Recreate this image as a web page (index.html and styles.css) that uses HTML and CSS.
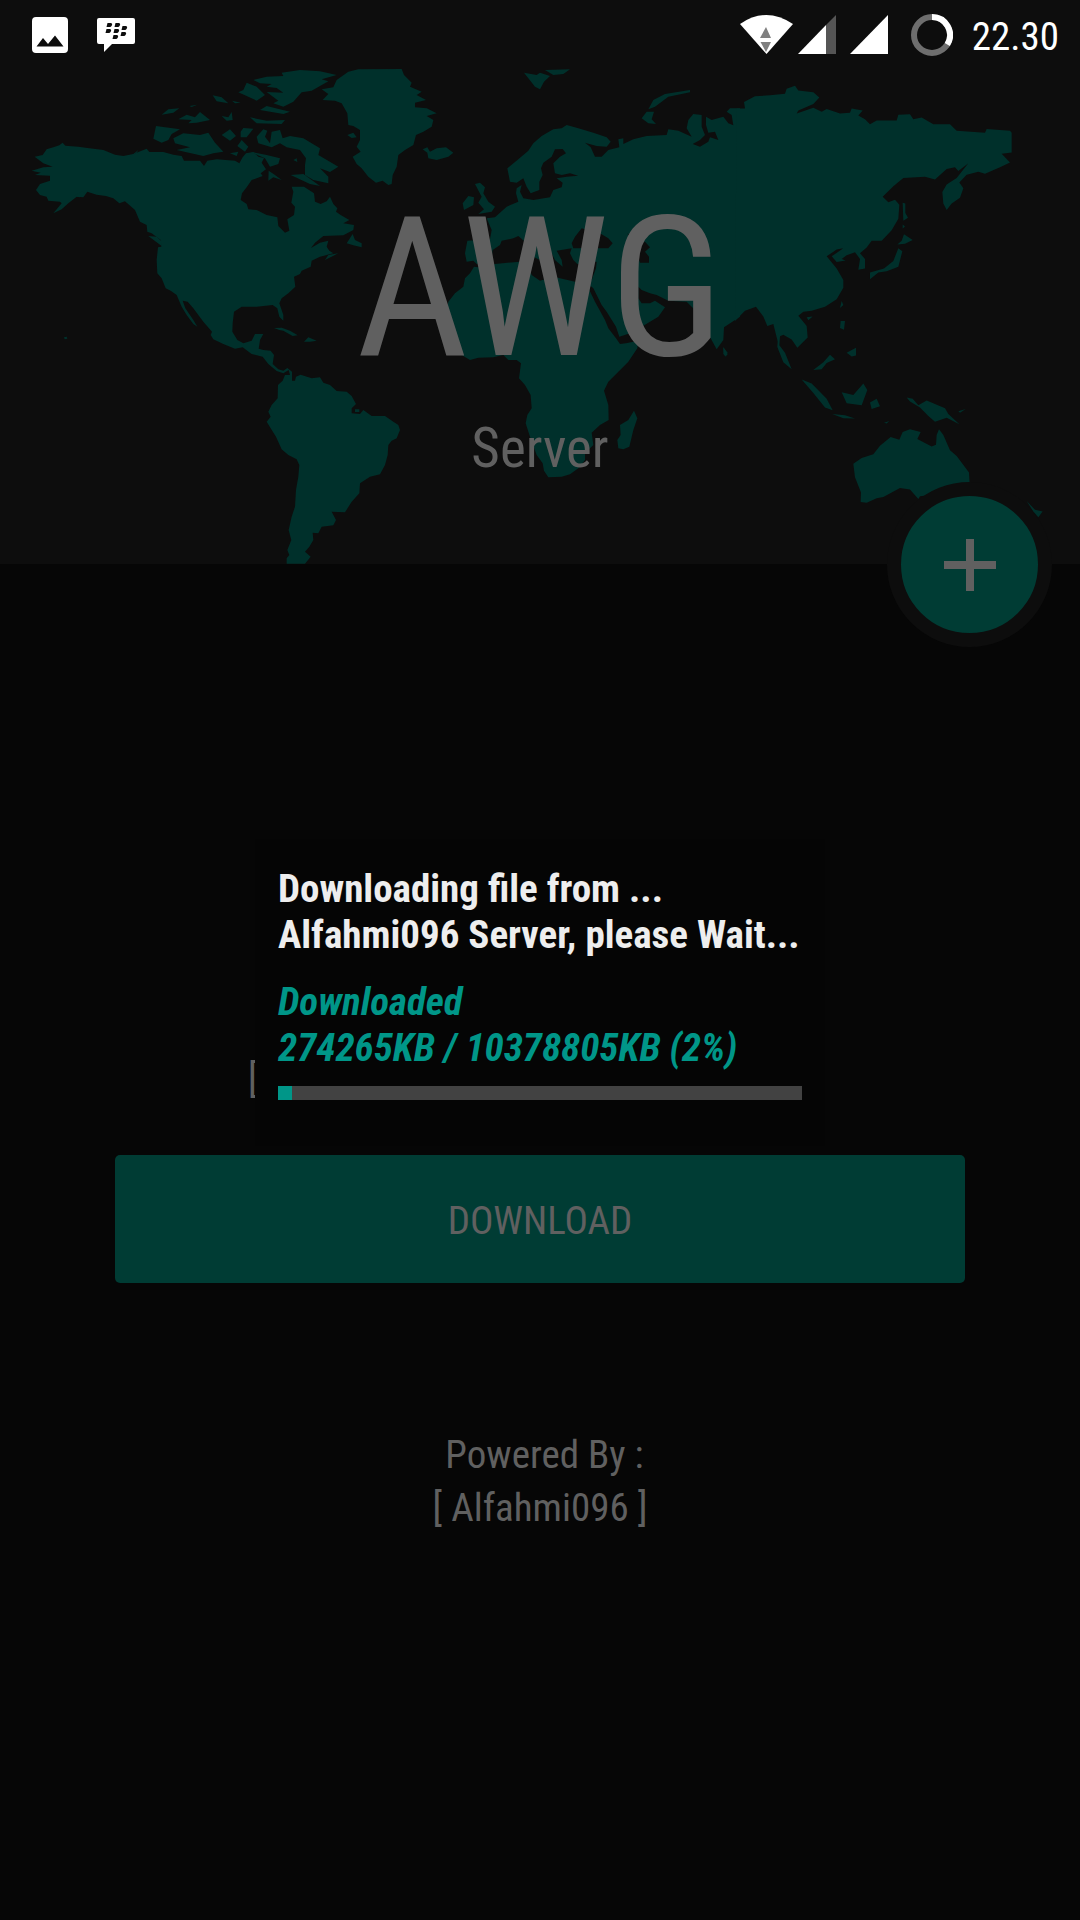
FILE: index.html
```html
<!DOCTYPE html>
<html lang="en">
<head>
<meta charset="utf-8">
<meta name="viewport" content="width=device-width, initial-scale=1">
<title>AWG Server</title>
<link rel="stylesheet" href="styles.css">
</head>
<body>
<div class="status-bar">
  <div class="status-group status-left">
    <svg width="36" height="36" viewBox="0 0 36 36" aria-hidden="true"><path fill="#fff" fill-rule="evenodd" d="M4 0H32Q36 0 36 4V32Q36 36 32 36H4Q0 36 0 32V4Q0 0 4 0ZM4.500 29.500H31.500L23 18.500 16 27 11 21Z"/></svg>
    <svg width="38" height="36" viewBox="0 0 38 36" aria-hidden="true"><path fill="#fff" d="M2 1H36Q38 1 38 3V25Q38 27 36 27H15L7 35V27H2Q0 27 0 25V3Q0 1 2 1Z"/><g fill="#0d0d0d"><path id="seed" d="M10.500 6H14Q16 6.500 14.500 9 14 10 13 10H9.500Z"/><use href="#seed" x="8"/><use href="#seed" x="-1" y="6"/><use href="#seed" x="7" y="6"/><use href="#seed" x="15" y="3"/><use href="#seed" x="14" y="9"/><use href="#seed" x="6" y="12"/></g></svg>
  </div>
  <div class="status-group status-right">
    <svg class="wifi" width="53" height="39" viewBox="0 0 53 39" aria-hidden="true"><path fill="#fff" d="M0 9Q26 -9 53 9L26.500 39Z"/><path fill="#808080" d="M20 23 26 12 31 23ZM20.500 27H31L26 37Z"/></svg>
    <svg class="signal" width="38" height="39" viewBox="0 0 38 39" aria-hidden="true"><path fill="#555" d="M28 10 38 0V39H28Z"/><path fill="#fff" d="M0 39 28 10V39Z"/></svg>
    <svg class="signal-full" width="38" height="39" viewBox="0 0 38 39" aria-hidden="true"><path fill="#fff" d="M0 39 38 0V39Z"/></svg>
    <svg class="battery" width="42" height="42" viewBox="0 0 42 42" fill="none" stroke-width="6" aria-hidden="true"><circle cx="21" cy="21" r="18" stroke="#6e6e6e"/><path stroke="#fff" d="M21 3A18 18 0 0 1 36.300 30.500"/></svg>
    <time class="clock">22.30</time>
  </div>
</div>

<header class="hero">
  <svg class="map" viewBox="0 69 1080 495" preserveAspectRatio="xMidYMid slice" aria-hidden="true">
    <!-- Americas and Greenland -->
    <g transform="translate(0 60) scale(.33333)">
      <path d="M104 290 128 285 140 268 160 262 178 256 188 248 196 257 235 260 262 264 310 270 345 284 370 288 400 282 440 266 448 276 490 276 520 284 545 288 552 302 600 302 612 318 622 302 650 298 705 302 718 310 728 292 738 280 760 276 775 290 792 294 785 308 798 328 782 340 788 348 755 360 740 382 726 400 722 420 740 432 745 448 770 450 800 465 832 472 835 498 855 518 868 512 862 478 882 465 885 440 874 428 880 395 875 380 912 380 942 400 945 425 962 432 980 424 990 410 1000 432 1012 445 1008 455 1022 465 1048 480 1030 490 1062 495 1060 510 1030 526 970 528 945 548 933 564 960 548 985 542 980 560 988 572 1000 580 960 590 935 602 932 620 905 632 900 642 882 650 886 680 865 700 845 715 838 730 850 765 850 782 838 770 832 745 818 735 770 740 725 740 702 755 698 790 697 815 712 840 730 850 755 842 765 822 790 822 780 840 776 866 790 870 812 872 822 885 818 912 835 928 850 932 862 924 876 935 876 962 885 962 888 950 902 944 935 955 960 952 970 968 990 975 1010 993 1040 995 1055 1008 1068 1032 1055 1045 1055 1060 1080 1062 1090 1050 1115 1068 1155 1068 1180 1085 1195 1095 1200 1110 1190 1135 1175 1142 1165 1155 1163 1185 1155 1215 1140 1243 1110 1250 1080 1270 1078 1300 1055 1325 1035 1357 995 1355 1008 1380 1000 1396 965 1400 955 1420 938 1418 940 1440 928 1460 915 1475 932 1490 915 1511 860 1511 860 1495 868 1485 862 1470 874 1440 866 1410 875 1370 885 1340 888 1290 895 1250 898 1215 890 1198 865 1185 845 1168 828 1130 812 1105 800 1085 812 1070 805 1055 815 1035 833 1015 834 975 848 962 855 945 870 945 866 930 850 940 830 933 805 912 788 890 755 882 728 862 705 866 670 852 640 838 632 825 636 815 610 785 580 745 563 725 548 722 556 745 580 780 592 800 580 792 560 765 545 740 530 705 512 692 497 685 485 655 472 640 470 600 474 562 484 560 482 540 455 520 442 515 440 495 420 485 405 450 375 424 358 430 340 415 318 408 290 404 262 395 250 412 230 410 205 430 185 448 160 460 185 430 180 425 145 422 140 410 120 405 108 390 120 372 150 362 150 347 105 345 122 338 95 332 130 322 158 320 130 310Z"/>
      <path d="M965 88 1000 82 1010 60 1045 35 1075 28 1205 27 1212 45 1235 68 1230 80 1265 95 1250 105 1278 120 1245 128 1245 142 1280 145 1310 160 1280 168 1300 180 1295 200 1270 215 1248 225 1240 255 1215 270 1195 285 1190 320 1178 345 1175 372 1165 375 1148 362 1128 368 1105 350 1085 325 1070 312 1058 290 1082 275 1070 260 1080 240 1080 210 1060 198 1045 195 1042 160 1025 130 1005 122 968 120 985 102Z"/>
      <path d="M760 60 800 50 850 48 845 38 900 30 960 34 1010 45 965 58 985 64 935 92 905 97 880 125 850 140 820 130 835 122 800 96 850 98 830 84 800 80 815 72 780 70ZM740 68 770 80 795 105 770 122 715 97 730 90ZM780 150 800 138 870 155 850 162ZM750 172 800 182 855 180 845 192 770 190ZM638 106 665 112 685 130 650 124ZM696 122 722 128 705 130ZM568 138 592 134 575 141ZM485 164 505 148 538 145 520 158ZM535 178 560 164 585 172 600 156 630 180 590 188 565 190 575 180ZM665 168 685 172 695 156 698 180 680 182ZM468 198 540 208 515 222 505 240 485 248 460 236ZM520 235 550 220 600 225 625 218 645 248 670 275 640 280 610 288 530 270 570 262 525 250ZM665 225 690 208 708 228 690 242ZM722 215 730 204 760 206 740 232 722 232ZM725 240 745 260 735 275 712 258ZM690 280 715 275 710 288ZM770 230 790 208 802 212 795 230 810 250 815 215 840 210 848 235 870 228 910 235 960 265 955 285 1015 320 990 336 960 325 985 350 985 370 940 360 915 345 915 315 918 295 900 270 860 262 840 250 815 262 775 250ZM750 275 800 285 840 295 835 312 810 320 795 295ZM806 332 825 345 845 360 820 352 805 362ZM872 345 910 342 960 378 972 380 930 372ZM880 300 890 295 892 306ZM222 408 245 395 258 398 240 412ZM390 290 415 270 410 278ZM445 528 470 530 486 545 485 558ZM1040 550 1058 522 1065 540 1085 550 1085 562 1060 556ZM975 600 985 585 1015 580ZM822 804 845 803 870 812 893 826 878 828 850 812 838 810ZM912 845 925 832 950 842 930 845ZM1065 1048H1078V1056H1065ZM1042 225 1060 218 1070 232 1055 234ZM192 832 200 830 202 836 194 838Z"/>
    </g>
    <!-- Europe, Africa and western Asia -->
    <g transform="translate(340 60) scale(.33333)">
      <path fill-rule="evenodd" d="M502 325 535 298 565 272 580 250 605 228 640 208 665 205 680 195 715 205 760 218 800 232 812 245 800 260 770 258 735 248 752 262 765 290 785 290 805 270 838 262 835 238 850 235 850 252 880 238 920 228 980 225 985 208 1015 212 1055 230 1040 205 1045 180 1060 162 1085 165 1085 200 1095 225 1080 240 1058 252 1080 260 1105 245 1110 232 1135 240 1125 215 1105 218 1098 195 1098 170 1115 180 1150 170 1165 190 1180 196 1175 165 1160 155 1170 145 1200 145V770L1152 802 1150 840 1130 868 1112 835 1095 790 1075 760 1055 740 1040 725 985 722 950 705 930 700 905 690 895 680 895 715 905 730 930 730 945 722 975 742 955 770 905 800 870 820 838 830 828 800 800 755 785 735 760 685 752 678 748 690 765 725 795 780 805 805 828 835 840 852 858 850 895 842 892 865 865 905 835 935 805 965 792 992 805 1035 806 1080 780 1095 755 1118 760 1155 735 1180 735 1200 715 1225 690 1243 665 1250 625 1252 612 1232 608 1210 590 1185 570 1130 557 1090 562 1065 575 1045 572 1005 555 975 537 955 543 910 530 900 505 900 490 885 460 892 415 893 390 900 360 882 330 850 310 800 325 725 345 700 370 680 375 655 390 640 402 620 415 622 465 612 540 605 560 600 575 645 600 662 640 650 660 655 705 665 745 665 755 660 768 625 770 605 735 610 712 612 700 600 690 580 695 565 650 572 665 600 668 620 645 600 635 580 610 555 590 545 600 600 580 590 555 545 535 528 520 535 485 542 480 555 458 570 455 590 440 605 410 612 400 602 380 605 375 580 382 542 420 540 450 538 455 510 440 475 465 472 500 440 535 425 528 400 530 385 545 375 540 395 550 415 580 420 630 412 640 390 665 382 668 368 650 355 680 350 715 347 690 340 665 345 645 340 640 310 660 290 678 280 668 267 645 268 635 290 610 308 603 325 608 345 598 365 598 390 572 400 560 380 550 355 530 368 510 365ZM695 550 705 530 725 505 750 512 785 498 780 520 805 535 818 550 805 565 775 565 750 558 720 565 700 565ZM862 520 895 545 915 545 930 562 915 575 927 590V608L900 608 885 560Z"/>
      <path d="M248 268 262 262 270 275 290 265 318 262 340 278 325 290 290 300 265 295 262 278ZM552 38 590 45 600 38 630 48 612 65 600 88 585 80 565 55ZM615 30 690 28 670 42 640 45ZM925 148 940 120 975 102 1050 90 1050 97 985 110 945 140ZM905 175 920 155 942 155 935 178 948 192 925 190ZM405 372 420 368 435 382 430 400 445 425 465 440 455 455 415 462 432 448 415 428 425 410ZM368 430 385 408 402 412 400 435 372 450ZM835 1165 832 1140 842 1125 840 1095 865 1080 882 1052 892 1075 880 1110 868 1160 850 1168ZM1150 862 1163 878 1158 890 1150 882Z"/>
    </g>
    <!-- Eastern Asia and Oceania -->
    <g transform="translate(680 60) scale(.33333 .38272)">
      <path d="M170 127 195 127 192 110 225 95 270 92 315 88 320 75 345 67 355 80 400 84 418 98 400 115 355 132 350 140 400 125 425 135 440 128 480 140 510 138 515 127 548 132 535 145 555 155 570 168 590 158 650 158 655 143 690 142 700 155 725 150 760 168 810 168 830 185 915 190 920 180 990 185 995 190 995 242 965 245 990 268 960 280 915 297 895 292 860 300 838 320 850 335 840 360 815 375 800 392 790 375 787 345 800 325 830 308 865 270 835 290 825 280 800 285 765 312 735 305 670 308 640 330 608 357 625 372 645 365 658 378 655 415 635 445 605 472 575 472 560 490 540 505 555 520 555 545 535 548 540 520 525 502 500 510 485 520 497 524 470 528 455 513 490 492 470 495 440 513 470 545 490 575 490 595 470 625 435 645 395 655 370 658 355 668 380 695 383 725 352 752 335 730 310 718 300 722 298 745 315 765 335 808 310 790 292 750 293 735 280 690 262 695 250 670 228 645 195 655 165 682Z"/>
      <path d="M668 373 676 375 676 400 684 412 670 420ZM668 430 675 435 668 440ZM672 455 698 470 675 480 652 482 665 472ZM655 492 667 500 655 540 620 552 595 555 570 573 570 555 612 545 640 525ZM485 630 490 640 480 648ZM380 672 398 670 385 680ZM130 750 143 770 133 772ZM482 682 495 682 492 705 480 700ZM500 765 528 752 528 772 515 775ZM400 810 430 790 450 770 465 782 440 792 425 808ZM365 835 395 845 440 885 458 915 435 908 400 870ZM457 925 495 928 525 937 490 936ZM485 868 520 875 550 845 562 862 545 902 500 897ZM570 895 590 885 600 905 575 912ZM680 882 698 885 715 902 740 890 795 910 805 925 838 952 800 935 765 945 745 930 720 908 690 892ZM835 918 857 912 840 922ZM612 948 628 943 620 950ZM520 1055 545 1040 580 1030 600 1008 632 985 658 992 668 972 690 965 722 972 712 990 755 1010 768 1005 770 980 777 965 790 980 810 1020 830 1035 867 1078 870 1125 720 1140 715 1147 690 1122 660 1118 610 1142 590 1145 560 1157 542 1155 543 1130 525 1090ZM1040 1152 1065 1175 1088 1180 1075 1195 1060 1180Z"/>
    </g>
  </svg>
  <h1 class="title">AWG</h1>
  <p class="subtitle">Server</p>
  <button class="fab" type="button" aria-label="Add"><svg width="52" height="52" viewBox="0 0 52 52" aria-hidden="true"><path fill="none" stroke="#606060" stroke-width="8" d="M26 0V52M0 26H52"/></svg></button>
</header>

<main class="content">
  <p class="note">[</p>
  <button class="download" type="button">DOWNLOAD</button>
  <p class="credit">&nbsp;Powered By :<br>[ Alfahmi096 ]</p>
</main>

<div class="overlay">
  <section class="dialog" role="dialog" aria-labelledby="dialog-message">
    <p class="message" id="dialog-message">Downloading file from ...<br>Alfahmi096 Server, please Wait...</p>
    <label class="amount" for="download-progress">Downloaded<br>274265KB / 10378805KB (2%)</label>
    <progress class="progress" id="download-progress" value="274265" max="10378805"></progress>
  </section>
</div>
</body>
</html>
```

FILE: styles.css
```css
* {
  box-sizing: border-box;
}

body {
  margin: 0;
  min-height: 100vh;
  background: #060606;
  color: #606060;
  font-family: "Roboto Condensed", Roboto, sans-serif;
  font-size: 39px;
}

h1,
p {
  margin: 0;
  font-weight: 400;
}

button {
  border: 0;
  padding: 0;
  font: inherit;
  color: inherit;
  cursor: pointer;
}

svg {
  display: block;
}

.status-bar {
  display: flex;
  justify-content: space-between;
  height: 69px;
  padding: 0 21px 0 32px;
  background: #0d0d0d;
  color: #fff;
}

.status-group {
  display: flex;
  align-items: center;
}

.status-left {
  gap: 29px;
}

.signal {
  margin-left: 5px;
}

.signal-full {
  margin-left: 14px;
}

.battery {
  margin: 0 19px 0 23px;
}

.clock {
  line-height: 46px;
  padding-top: 4px;
}

.hero {
  position: relative;
  display: flex;
  flex-direction: column;
  align-items: center;
  height: 495px;
  padding-top: 106px;
  background: #0d0d0d;
}

.map {
  position: absolute;
  inset: 0;
  width: 100%;
  height: 100%;
  fill: #00302b;
}

.title {
  position: relative;
  font-size: 194px;
  line-height: 228px;
}

.subtitle {
  position: relative;
  font-size: 55px;
  line-height: 64px;
  padding-top: 13px;
}

.fab {
  position: absolute;
  right: 28px;
  bottom: -83px;
  display: grid;
  place-items: center;
  width: 165px;
  height: 165px;
  border: 14px solid #0d0d0d;
  border-radius: 50%;
  background: #003c34;
}

.content {
  display: flex;
  flex-direction: column;
  padding: 489px 115px 0;
}

.note {
  padding-left: 133px;
  line-height: 53px;
}

.download {
  height: 128px;
  margin-top: 49px;
  padding-top: 4px;
  border-radius: 5px;
  background: #003c34;
}

.credit {
  margin-top: 146px;
  line-height: 53px;
  text-align: center;
}

.overlay {
  position: fixed;
  inset: 0;
  display: grid;
  place-items: center;
  padding-top: 64px;
}

.dialog {
  display: flex;
  flex-direction: column;
  min-width: 570px;
  padding: 27px 23px 46px;
  background: #050505;
  font-weight: 700;
  line-height: 46px;
}

.message {
  color: #eee;
  font-weight: 700;
}

.amount {
  margin-top: 21px;
  color: #009688;
  font-style: italic;
}

.progress {
  appearance: none;
  width: 100%;
  height: 14px;
  margin-top: 15px;
  border: 0;
  background: #424242;
}

.progress::-webkit-progress-bar {
  background: #424242;
}

.progress::-webkit-progress-value {
  background: #009688;
}
```
